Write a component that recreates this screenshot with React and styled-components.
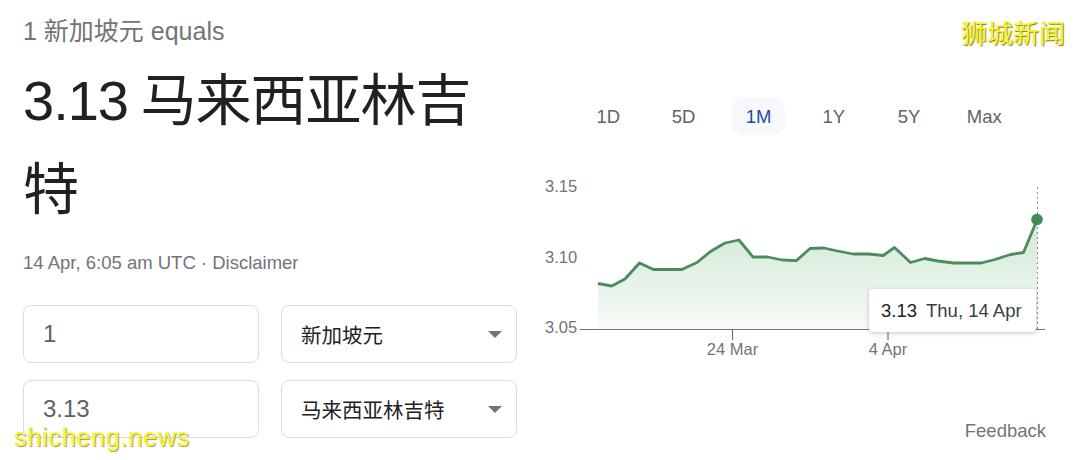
import React from 'react'
import styled, { createGlobalStyle } from 'styled-components'

const GlobalStyle = createGlobalStyle`
  html, body {
    margin: 0;
    padding: 0;
    background: #fff;
  }
  body {
    font-family: "Liberation Sans", Arial, "Noto Sans CJK SC", sans-serif;
    color: #202124;
  }
`

const ranges = ['1D', '5D', '1M', '1Y', '5Y', 'Max']

// chart points, in page pixels (the svg viewBox uses the same space)
const points = [
  [598, 283.5], [611.7, 286], [625, 279], [639.5, 263], [653.5, 269.5],
  [681.8, 269.5], [697, 262.5], [710.5, 251.5], [725, 243], [739, 240],
  [753, 257], [767.5, 257], [782.5, 260], [796.3, 260.7], [810, 248.5],
  [824, 248], [837.6, 251], [853, 254], [868.7, 254], [883.3, 255.5],
  [894.5, 247.5], [910.5, 262.5], [924.8, 258.5], [937.9, 261], [953.5, 263],
  [969.1, 263], [981.2, 263], [995, 259.5], [1010.6, 254.5], [1023.5, 252.5],
  [1037, 220],
]

const AXIS_Y = 329.5

const linePath = points.map(([x, y], i) => `${i ? 'L' : 'M'}${x} ${y}`).join(' ')
const areaPath = `${linePath} L1037 ${AXIS_Y} L598 ${AXIS_Y} Z`

const Chart = () => (
  <ChartSvg viewBox="540 175 510 195" width="510" height="195">
    <defs>
      <linearGradient id="fill" x1="0" y1="0" x2="0" y2="1">
        <stop offset="0%" stopColor="#5fb26f" stopOpacity="0.3" />
        <stop offset="100%" stopColor="#5fb26f" stopOpacity="0.05" />
      </linearGradient>
    </defs>
    <g fill="#70757a" fontSize="16.5" fontFamily="Liberation Sans, Arial, sans-serif">
      <text x="545" y="188" dominantBaseline="middle">3.15</text>
      <text x="545" y="258.5" dominantBaseline="middle">3.10</text>
      <text x="545" y="329" dominantBaseline="middle">3.05</text>
      <text x="732.5" y="351" textAnchor="middle" dominantBaseline="middle">24 Mar</text>
      <text x="888" y="351" textAnchor="middle" dominantBaseline="middle">4 Apr</text>
    </g>
    <path d={areaPath} fill="url(#fill)" />
    <line x1="580" x2="1045" y1={AXIS_Y} y2={AXIS_Y} stroke="#70757a" strokeWidth="1" />
    <line x1="732.5" x2="732.5" y1={AXIS_Y} y2="340" stroke="#70757a" strokeWidth="1.2" />
    <line x1="888" x2="888" y1={AXIS_Y} y2="340" stroke="#70757a" strokeWidth="1.2" />
    <line x1="1037.5" x2="1037.5" y1="187" y2="331" stroke="#8a8d91" strokeWidth="1" strokeDasharray="2 3" />
    <path d={linePath} fill="none" stroke="#4b8b5f" strokeWidth="2.8" strokeLinejoin="round" />
    <circle cx="1037" cy="219.5" r="5.8" fill="#3f8a56" />
  </ChartSvg>
)

export default function App() {
  return (
    <Page>
      <GlobalStyle />
      <Left>
        <Subtitle>1 新加坡元 equals</Subtitle>
        <Headline>3.13 马来西亚林吉特</Headline>
        <Meta>14 Apr, 6:05 am UTC · Disclaimer</Meta>
        <Converter>
          <Field readOnly value="1" />
          <Select>新加坡元<Caret /></Select>
          <Field readOnly value="3.13" />
          <Select>马来西亚林吉特<Caret /></Select>
        </Converter>
      </Left>
      <Right>
        <Ranges>
          {ranges.map((r) => (
            <Range key={r} $active={r === '1M'}>{r}</Range>
          ))}
        </Ranges>
        <ChartWrap>
          <Chart />
          <Tooltip>
            <TipValue>3.13</TipValue>
            <TipDate>Thu, 14 Apr</TipDate>
          </Tooltip>
        </ChartWrap>
        <Feedback>Feedback</Feedback>
      </Right>
      <BrandMark>狮城新闻</BrandMark>
      <SiteMark>shicheng.news</SiteMark>
    </Page>
  )
}

const Page = styled.div`
  position: relative;
  display: flex;
  width: 1080px;
  height: 460px;
  overflow: hidden;
`

const Left = styled.div`
  width: 494px;
  padding: 16px 23px 0 23px;
`

const Subtitle = styled.div`
  font-size: 25px;
  line-height: 30px;
  color: #70757a;
`

const Headline = styled.div`
  margin-top: 9.5px;
  width: 494px;
  font-size: 56px;
  line-height: 89px;
  letter-spacing: -1px;
  word-spacing: -2px;
  color: #202124;
`

const Meta = styled.div`
  margin-top: 17.5px;
  font-size: 18.5px;
  line-height: 24px;
  color: #70757a;
`

const Converter = styled.div`
  display: grid;
  grid-template-columns: 236px 236px;
  grid-auto-rows: 58px;
  column-gap: 22px;
  row-gap: 17px;
  margin-top: 30px;
`

const Field = styled.input`
  box-sizing: border-box;
  width: 100%;
  height: 58px;
  margin: 0;
  padding: 0 19px;
  border: 1px solid #dadce0;
  border-radius: 8px;
  background: #fff;
  font-family: inherit;
  font-size: 24px;
  color: #5f6368;
  outline: none;
`

const Select = styled.div`
  box-sizing: border-box;
  display: flex;
  align-items: center;
  justify-content: space-between;
  height: 58px;
  padding: 0 14px 0 19px;
  border: 1px solid #dadce0;
  border-radius: 8px;
  font-size: 20.5px;
  color: #202124;
`

const Caret = styled.span`
  width: 0;
  height: 0;
  border-left: 7px solid transparent;
  border-right: 7px solid transparent;
  border-top: 7px solid #70757a;
`

const Right = styled.div`
  display: flex;
  flex-direction: column;
  width: 510px;
  padding: 98px 4px 0 0;
  box-sizing: border-box;
`

const Ranges = styled.div`
  display: flex;
  gap: 22.2px;
  padding-left: 41.8px;
  height: 37px;
`

const Range = styled.div`
  display: flex;
  align-items: center;
  justify-content: center;
  width: 53px;
  height: 37px;
  border-radius: 10px;
  font-size: 18.5px;
  color: ${(p) => (p.$active ? '#174ea6' : '#5f6368')};
  background: ${(p) => (p.$active ? '#f7f8fa' : 'transparent')};
`

const ChartWrap = styled.div`
  position: relative;
  margin-top: 40px;
  height: 195px;
`

const ChartSvg = styled.svg`
  display: block;
`

const Tooltip = styled.div`
  position: absolute;
  left: 329px;
  top: 114px;
  width: 167px;
  height: 43px;
  box-sizing: border-box;
  display: flex;
  align-items: center;
  gap: 9px;
  padding-left: 12px;
  background: #fff;
  border-radius: 4px;
  box-shadow: 0 1px 4px rgba(60, 64, 67, 0.3);
  font-size: 18.5px;
`

const TipValue = styled.span`
  color: #202124;
`

const TipDate = styled.span`
  color: #3c4043;
`

const Feedback = styled.div`
  margin-top: 48.5px;
  text-align: right;
  font-size: 18.5px;
  line-height: 24px;
  color: #70757a;
`

const BrandMark = styled.div`
  position: absolute;
  left: 961px;
  top: 16px;
  font-family: "Noto Sans CJK SC", sans-serif;
  font-size: 26px;
  line-height: 32px;
  color: #f6f62a;
  text-shadow: 1px 1px 1px rgba(100, 100, 0, 0.85);
`

const SiteMark = styled.div`
  position: absolute;
  left: 14px;
  top: 425px;
  font-size: 25px;
  line-height: 25px;
  letter-spacing: 0.8px;
  color: #f6f63a;
  text-shadow: 1px 1px 1px rgba(110, 110, 0, 0.7);
`
